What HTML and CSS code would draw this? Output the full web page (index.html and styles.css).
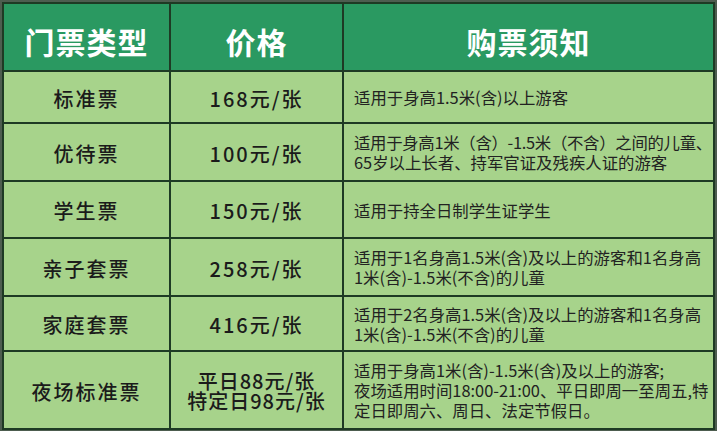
FILE: index.html
```html
<!DOCTYPE html>
<html lang="zh-CN">
<head>
<meta charset="utf-8">
<title>门票价格</title>
<link rel="stylesheet" href="styles.css">
</head>
<body>
<div class="ticket-table">
  <div class="cell head">门票类型</div>
  <div class="cell head">价格</div>
  <div class="cell head">购票须知</div>

  <div class="cell name">标准票</div>
  <div class="cell price">168元/张</div>
  <div class="cell note">适用于身高1.5米(含)以上游客</div>

  <div class="cell name">优待票</div>
  <div class="cell price">100元/张</div>
  <div class="cell note"><span class="tight">适用于身高1米（含）-1.5米（不含）之间的儿童、</span><br>65岁以上长者、持军官证及残疾人证的游客</div>

  <div class="cell name">学生票</div>
  <div class="cell price">150元/张</div>
  <div class="cell note">适用于持全日制学生证学生</div>

  <div class="cell name">亲子套票</div>
  <div class="cell price">258元/张</div>
  <div class="cell note">适用于1名身高1.5米(含)及以上的游客和1名身高<br>1米(含)-1.5米(不含)的儿童</div>

  <div class="cell name">家庭套票</div>
  <div class="cell price">416元/张</div>
  <div class="cell note">适用于2名身高1.5米(含)及以上的游客和1名身高<br>1米(含)-1.5米(不含)的儿童</div>

  <div class="cell name">夜场标准票</div>
  <div class="cell price price-multi">平日88元/张<br>特定日98元/张</div>
  <div class="cell note">适用于身高1米(含)-1.5米(含)及以上的游客;<br>夜场适用时间18:00-21:00、平日即周一至周五,特<br>定日即周六、周日、法定节假日。</div>
</div>
</body>
</html>
```

FILE: styles.css
```css
html, body {
  margin: 0;
  padding: 0;
}

body {
  width: 717px;
  height: 431px;
  background: #4d5d4f;
  overflow: hidden;
  font-family: "Noto Sans CJK SC", "Noto Sans", sans-serif;
}

.ticket-table {
  margin: 2px 0 0 2px;
  width: 709px;
  display: grid;
  grid-template-columns: 165px 171px 369px;
  grid-template-rows: 66px 50px 56px 55px 56px 53px 76px;
  gap: 2px;
  padding: 2px;
  background: #1e3a24;
}

.cell {
  background: #a7d38b;
  color: #1b1b1b;
  display: flex;
  align-items: center;
}

.head {
  background: #2a9961;
  color: #ffffff;
  font-weight: 700;
  font-size: 30px;
  letter-spacing: 1px;
  justify-content: center;
  padding-top: 8px;
  box-sizing: border-box;
}

.name,
.price {
  justify-content: center;
  text-align: center;
  font-size: 20px;
  font-weight: 500;
  letter-spacing: 2px;
  padding-top: 2px;
  box-sizing: border-box;
}

.price-multi {
  line-height: 20px;
  letter-spacing: 1px;
}

.note {
  display: block;
  font-size: 16.4px;
  line-height: 20px;
  padding: 0 0 0 10px;
  box-sizing: border-box;
  color: #222;
  white-space: nowrap;
  overflow: hidden;
  align-content: center;
}

.tight {
  letter-spacing: -0.3px;
}
```
